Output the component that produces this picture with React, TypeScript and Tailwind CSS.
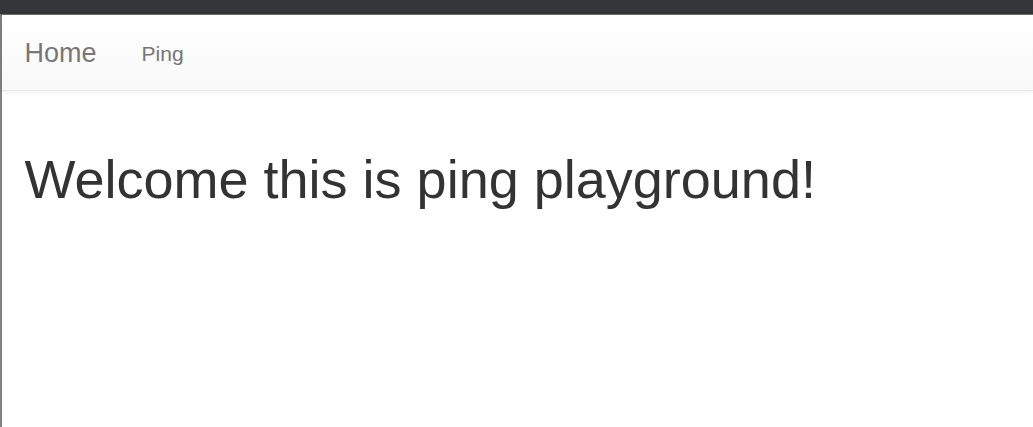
export default function App() {
  return (
    <div className="min-h-[427px] bg-white font-['Liberation_Sans',Arial,sans-serif]">
      {/* window chrome strip */}
      <div className="h-[15px] bg-[#35363a] border-b border-[#6e6e70]" />

      <div className="min-h-[412px] border-l-2 border-[#808080]">
        {/* navbar */}
        <nav className="flex h-[76px] items-center bg-gradient-to-b from-white to-[#f8f8f8] border-b border-[#e7e7e7] shadow-[0_1px_5px_rgba(0,0,0,0.075)]">
          <a className="px-[22.5px] text-[27px] leading-[30px] text-[#777]">Home</a>
          <a className="px-[22.5px] text-[21px] leading-[30px] text-[#777] mt-[2px]">Ping</a>
        </nav>

        <div className="px-[22.5px]">
          <h1 className="mt-[59px] text-[54px] leading-[1.1] text-[#333]">
            Welcome this is ping playground!
          </h1>
        </div>
      </div>
    </div>
  )
}
